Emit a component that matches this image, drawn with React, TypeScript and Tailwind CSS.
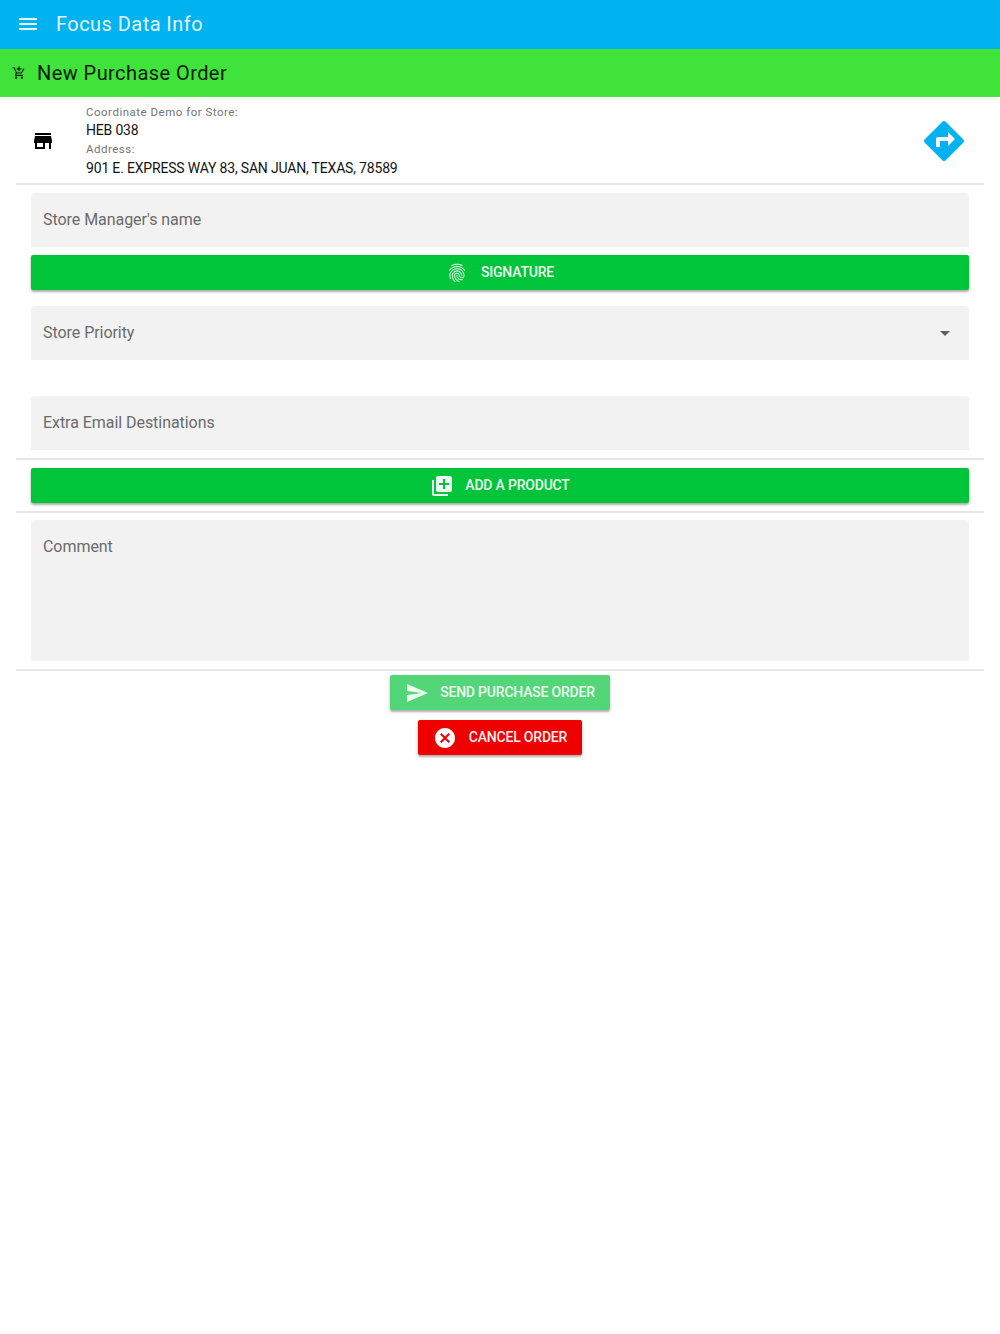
const paths = {
    menu: 'M3 18h18v-2H3v2zm0-5h18v-2H3v2zm0-7v2h18V6H3z',
    cart: 'M11 9h2V6h3V4h-3V1h-2v3H8v2h3v3zm-4 9c-1.1 0-1.99.9-1.99 2S5.9 22 7 22s2-.9 2-2-.9-2-2-2zm10 0c-1.1 0-1.99.9-1.99 2s.89 2 1.99 2 2-.9 2-2-.9-2-2-2zm-9.83-3.25l.03-.12.9-1.63h7.45c.75 0 1.41-.41 1.75-1.03l3.86-7.01L19.42 4h-.01l-1.1 2-2.76 5H8.53l-.13-.27L6.16 6l-.95-2-.94-2H1v2h2l3.6 7.59-1.35 2.45c-.16.28-.25.61-.25.96 0 1.1.9 2 2 2h12v-2H7.42c-.13 0-.25-.11-.25-.25z',
    store: 'M20 4H4v2h16V4zm1 10v-2l-1-5H4l-1 5v2h1v6h10v-6h4v6h2v-6h1zm-9 4H6v-4h6v4z',
    directions:
        'M21.71 11.29l-9-9c-.39-.39-1.02-.39-1.41 0l-9 9c-.39.39-.39 1.02 0 1.41l9 9c.39.39 1.02.39 1.41 0l9-9c.39-.38.39-1.01 0-1.41zM14 14.5V12h-4v3H8v-4c0-.55.45-1 1-1h5V7.5l3.5 3.5-3.5 3.5z',
    fingerprint:
        'M17.81 4.47c-.08 0-.16-.02-.23-.06C15.66 3.42 14 3 12.01 3c-1.98 0-3.86.47-5.57 1.41-.24.13-.54.04-.68-.2-.13-.24-.04-.55.2-.68C7.82 2.52 9.86 2 12.01 2c2.13 0 3.99.47 6.03 1.52.25.13.34.43.21.67-.09.18-.26.28-.44.28zM3.5 9.72c-.1 0-.2-.03-.29-.09-.23-.16-.28-.47-.12-.7.99-1.4 2.25-2.5 3.75-3.27C9.98 4.04 14 4.03 17.15 5.65c1.5.77 2.76 1.86 3.75 3.25.16.22.11.54-.12.7-.23.16-.54.11-.7-.12-.9-1.26-2.04-2.25-3.39-2.94-2.87-1.47-6.54-1.47-9.4.01-1.36.7-2.5 1.7-3.4 2.96-.08.14-.23.21-.39.21zm6.25 12.07c-.13 0-.26-.05-.35-.15-.87-.87-1.34-1.43-2.01-2.64-.69-1.23-1.05-2.73-1.05-4.34 0-2.97 2.54-5.39 5.66-5.39s5.66 2.42 5.66 5.39c0 .28-.22.5-.5.5s-.5-.22-.5-.5c0-2.42-2.09-4.39-4.66-4.39s-4.66 1.97-4.66 4.39c0 1.44.32 2.77.93 3.85.64 1.15 1.08 1.64 1.85 2.42.19.2.19.51 0 .71-.11.1-.24.15-.37.15zm7.17-1.85c-1.19 0-2.24-.3-3.1-.89-1.49-1.01-2.38-2.65-2.38-4.39 0-.28.22-.5.5-.5s.5.22.5.5c0 1.41.72 2.74 1.94 3.56.71.48 1.54.71 2.54.71.24 0 .64-.03 1.04-.1.27-.05.53.13.58.41.05.27-.13.53-.41.58-.57.11-1.07.12-1.21.12zM14.91 22c-.04 0-.09-.01-.13-.02-1.59-.44-2.63-1.03-3.72-2.1-1.4-1.39-2.17-3.24-2.17-5.22 0-1.62 1.38-2.94 3.08-2.94s3.08 1.32 3.08 2.94c0 1.07.93 1.94 2.08 1.94s2.08-.87 2.08-1.94c0-3.77-3.25-6.83-7.25-6.83-2.84 0-5.44 1.58-6.61 4.03-.39.81-.59 1.76-.59 2.8 0 .78.07 2.01.67 3.61.1.26-.03.55-.29.64-.26.1-.55-.04-.64-.29-.49-1.31-.73-2.61-.73-3.96 0-1.2.23-2.29.68-3.24 1.33-2.79 4.28-4.6 7.51-4.6 4.55 0 8.25 3.51 8.25 7.83 0 1.62-1.38 2.94-3.08 2.94s-3.08-1.32-3.08-2.94c0-1.07-.93-1.94-2.08-1.94s-2.08.87-2.08 1.94c0 1.71.66 3.31 1.87 4.51.95.94 1.86 1.46 3.27 1.85.27.07.42.35.35.61-.05.23-.26.38-.47.38z',
    library:
        'M4 6H2v14c0 1.1.9 2 2 2h14v-2H4V6zm16-4H8c-1.1 0-2 .9-2 2v12c0 1.1.9 2 2 2h12c1.1 0 2-.9 2-2V4c0-1.1-.9-2-2-2zm-1 9h-4v4h-2v-4H9V9h4V5h2v4h4v2z',
    send: 'M2.01 21L23 12 2.01 3 2 10l15 2-15 2z',
    cancel: 'M12 2C6.47 2 2 6.47 2 12s4.47 10 10 10 10-4.47 10-10S17.53 2 12 2zm5 13.59L15.59 17 12 13.41 8.41 17 7 15.59 10.59 12 7 8.41 8.41 7 12 10.59 15.59 7 17 8.41 13.41 12 17 15.59z',
};

function Icon({ d, className }: { d: string; className: string }) {
    return (
        <svg viewBox="0 0 24 24" fill="currentColor" className={className}>
            <path d={d} />
        </svg>
    );
}

function Field({ label, className, children }: { label: string; className: string; children?: React.ReactNode }) {
    return (
        <div className={`mx-[15px] flex justify-between rounded-t-[4px] bg-[#f2f2f2] pl-3 text-[16px] tracking-[-0.05px] text-[#6b6b6b] ${className}`}>
            <span>{label}</span>
            {children}
        </div>
    );
}

function Divider() {
    return <div className="h-[2px] bg-[#e6e6e6]" />;
}

const raised = 'shadow-[0_2px_2px_rgba(0,0,0,0.25),0_1px_4px_rgba(0,0,0,0.12)]';
const buttonText = 'text-[14px] font-medium tracking-[-0.2px]';

function WideButton({ icon, iconClass, label }: { icon: string; iconClass: string; label: string }) {
    return (
        <div className={`mx-[15px] flex h-[35px] items-center justify-center rounded-[2px] bg-[#00c43a] text-[#eefcf1] ${buttonText} ${raised}`}>
            <Icon d={icon} className={iconClass} />
            <span>{label}</span>
        </div>
    );
}

export default function App() {
    return (
        <div className="min-h-[1334px] bg-white font-['Roboto',sans-serif]">
            <header className="flex h-[49px] items-center bg-[#00b2ef] pb-[1px] pl-4 text-[#e3f7fe]">
                <Icon d={paths.menu} className="h-6 w-6" />
                <span className="ml-4 text-[20px] tracking-[0.45px]">Focus Data Info</span>
            </header>
            <div className="flex h-[48px] items-center bg-[#3fe33a] pl-3 text-[#071a06]">
                <Icon d={paths.cart} className="h-3.5 w-3.5" />
                <span className="ml-[11px] text-[20px] tracking-[0.43px]">New Purchase Order</span>
            </div>

            <main className="px-4">
                <section className="flex h-[86px] items-center">
                    <Icon d={paths.store} className="ml-[15px] mt-[2px] h-6 w-6 text-black" />
                    <div className="ml-[31px] flex-1 text-[14px] leading-[18.6px] tracking-[-0.18px] text-[#141414]">
                        <div className="text-[11.5px] tracking-[0.5px] text-[#757575]">Coordinate Demo for Store:</div>
                        <div>HEB 038</div>
                        <div className="text-[11.5px] tracking-[0.5px] text-[#757575]">Address:</div>
                        <div>901 E. EXPRESS WAY 83, SAN JUAN, TEXAS, 78589</div>
                    </div>
                    <Icon d={paths.directions} className="mr-[16px] mt-[2px] h-[48px] w-[48px] text-[#00b2ef]" />
                </section>
                <Divider />

                <Field label="Store Manager's name" className="mt-2 h-[54px] items-center" />
                <div className="mt-2">
                    <WideButton icon={paths.fingerprint} iconClass="mr-[13px] h-[22px] w-[22px]" label="SIGNATURE" />
                </div>
                <Field label="Store Priority" className="mt-4 h-[54px] items-center pr-[19px]">
                    <span className="h-0 w-0 border-x-[5px] border-t-[5px] border-x-transparent border-t-[#5f5f5f]" />
                </Field>
                <Field label="Extra Email Destinations" className="mt-9 h-[54px] items-center" />
                <div className="mt-2">
                    <Divider />
                </div>
                <div className="mt-2">
                    <WideButton icon={paths.library} iconClass="mr-[11px] h-[24px] w-[24px]" label="ADD A PRODUCT" />
                </div>
                <div className="mt-2">
                    <Divider />
                </div>
                <Field label="Comment" className="mt-[7px] h-[141px] pt-[17px] leading-[20px]" />
                <div className="mt-2">
                    <Divider />
                </div>

                <div className="mt-[4px] flex flex-col items-center gap-[10px]">
                    <div className={`flex h-[35px] w-[220px] items-center justify-center rounded-[2px] bg-[#52d678] text-[#eefcf1] ${buttonText} ${raised}`}>
                        <Icon d={paths.send} className="mr-[11px] h-6 w-6" />
                        <span>SEND PURCHASE ORDER</span>
                    </div>
                    <div className={`flex h-[35px] w-[164px] items-center justify-center rounded-[2px] bg-[#ee0000] text-[#fff0f0] ${buttonText} ${raised}`}>
                        <Icon d={paths.cancel} className="mr-[12px] h-6 w-6 text-white" />
                        <span>CANCEL ORDER</span>
                    </div>
                </div>
            </main>
        </div>
    );
}
